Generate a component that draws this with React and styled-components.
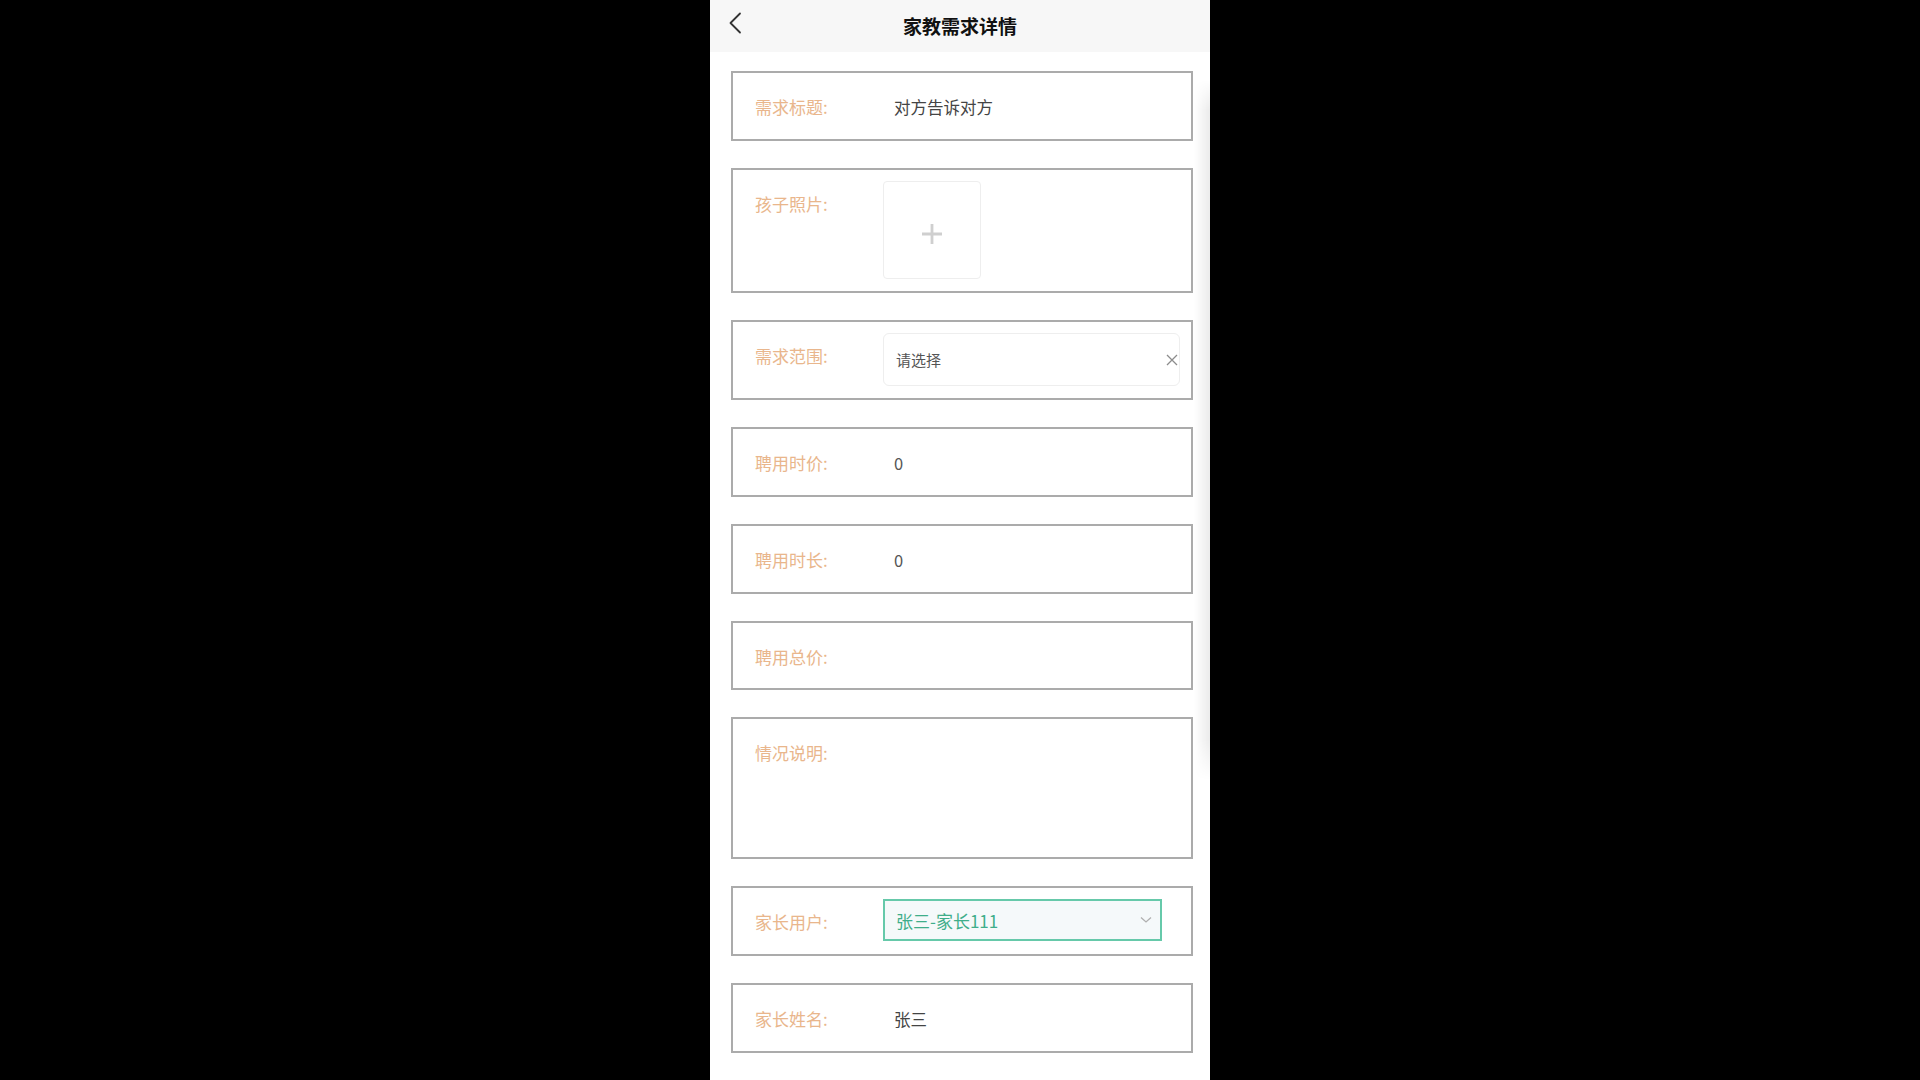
import React from "react";
import styled, { createGlobalStyle } from "styled-components";

const Global = createGlobalStyle`
  html, body { margin: 0; padding: 0; background: #000; }
  body { font-family: "Noto Sans CJK SC", "Noto Sans", sans-serif; }
  * { box-sizing: border-box; }
`;

const Screen = styled.div`
  width: 500px;
  height: 1080px;
  margin: 0 auto;
  background: #fff;
  overflow: hidden;
  position: relative;
`;

const Header = styled.div`
  height: 52px;
  background: #f7f7f7;
  display: flex;
  align-items: center;
  justify-content: center;
  position: relative;
`;

const BackButton = styled.div`
  position: absolute;
  left: 13px;
  top: 10px;
  width: 24px;
  height: 26px;
  display: flex;
  align-items: center;
  justify-content: center;
`;

const Title = styled.h1`
  margin: 0;
  font-size: 19px;
  font-weight: 700;
  color: #111;
  line-height: 26px;
  margin-top: -1px;
`;

const Form = styled.div`
  display: flex;
  flex-direction: column;
  gap: 27px;
  padding: 19px 0 0 21px;
  width: 483px;
`;

const Card = styled.div`
  display: flex;
  align-items: flex-start;
  border: 2px solid #ababab;
  padding: 11px 11px 12px 22px;
  min-height: ${(p) => p.$h || 70}px;
`;

const Label = styled.div`
  width: 128px;
  flex: none;
  font-size: 17px;
  line-height: 24px;
  padding-top: 11px;
  color: #e9b68c;
`;

const Value = styled.div`
  font-size: 16.5px;
  line-height: 24px;
  padding: 11px 0 7px 11px;
  color: ${(p) => (p.$muted ? "#555" : "#444")};
  min-height: 42px;
`;

const Upload = styled.div`
  width: 98px;
  height: 98px;
  border: 1px solid #eee;
  border-radius: 4px;
  display: flex;
  align-items: center;
  justify-content: center;
  padding-top: 7px;
`;

const SelectBox = styled.div`
  width: 297px;
  height: 53px;
  border: 1px solid #eee;
  border-radius: 6px;
  display: flex;
  align-items: center;
  justify-content: space-between;
  padding: 0 1px 0 12px;
  font-size: 15px;
  color: #555;
`;

const GreenSelect = styled.div`
  width: 279px;
  height: 42px;
  border: 2px solid #66c9aa;
  background: #f5f9fa;
  display: flex;
  align-items: center;
  justify-content: space-between;
  padding: 0 8px 0 11px;
  font-size: 17px;
  color: #3fae8a;
`;

const ScrollShade = styled.div`
  position: absolute;
  right: 0;
  top: 80px;
  width: 16px;
  height: 700px;
  background: linear-gradient(to right, rgba(0,0,0,0), rgba(0,0,0,0.08));
  -webkit-mask-image: linear-gradient(to bottom, transparent 0, #000 30px, #000 calc(100% - 40px), transparent 100%);
  mask-image: linear-gradient(to bottom, transparent 0, #000 30px, #000 calc(100% - 40px), transparent 100%);
  pointer-events: none;
`;

const Back = () => (
  <svg width="14" height="22" viewBox="0 0 14 22">
    <path d="M12 1.5 L2.5 11 L12 20.5" fill="none" stroke="#333" strokeWidth="1.8" strokeLinecap="round" strokeLinejoin="round" />
  </svg>
);

const Plus = () => (
  <svg width="22" height="22" viewBox="0 0 22 22">
    <path d="M11 1 V21 M1 11 H21" stroke="#cfcfcf" strokeWidth="2.8" />
  </svg>
);

const Close = () => (
  <svg width="12" height="12" viewBox="0 0 12 12">
    <path d="M1 1 L11 11 M11 1 L1 11" stroke="#8c8c8c" strokeWidth="1.3" />
  </svg>
);

const Chevron = () => (
  <svg width="12" height="8" viewBox="0 0 12 8">
    <path d="M1 1.5 L6 6 L11 1.5" fill="none" stroke="#b0b0b0" strokeWidth="1.3" />
  </svg>
);

export default function App() {
  return (
    <>
      <Global />
      <Screen>
        <Header>
          <BackButton><Back /></BackButton>
          <Title>家教需求详情</Title>
        </Header>
        <Form>
          <Card>
            <Label>需求标题:</Label>
            <Value>对方告诉对方</Value>
          </Card>
          <Card $h={125}>
            <Label>孩子照片:</Label>
            <Upload><Plus /></Upload>
          </Card>
          <Card $h={80}>
            <Label>需求范围:</Label>
            <SelectBox>
              <span>请选择</span>
              <Close />
            </SelectBox>
          </Card>
          <Card>
            <Label>聘用时价:</Label>
            <Value $muted>0</Value>
          </Card>
          <Card>
            <Label>聘用时长:</Label>
            <Value $muted>0</Value>
          </Card>
          <Card $h={69}>
            <Label>聘用总价:</Label>
            <Value></Value>
          </Card>
          <Card $h={142}>
            <Label>情况说明:</Label>
            <Value></Value>
          </Card>
          <Card>
            <Label>家长用户:</Label>
            <GreenSelect>
              <span>张三-家长111</span>
              <Chevron />
            </GreenSelect>
          </Card>
          <Card>
            <Label>家长姓名:</Label>
            <Value>张三</Value>
          </Card>
          <Card />
        </Form>
        <ScrollShade />
      </Screen>
    </>
  );
}
